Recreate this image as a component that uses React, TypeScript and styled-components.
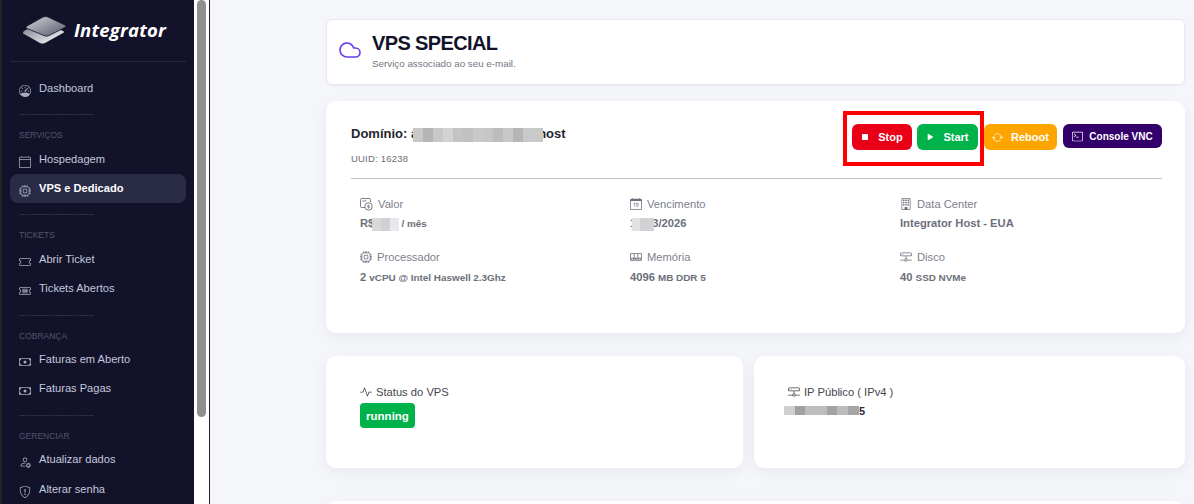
import React from 'react';
import styled, { createGlobalStyle } from 'styled-components';
import { Cloud, Square, Play } from 'lucide-react';
import {
  BsSpeedometer, BsCalendar4, BsCpu, BsTicket, BsTicketDetailed, BsCash, BsPersonGear, BsShieldExclamation,
  BsArrowRepeat, BsTerminal, BsCalendarDate, BsBuilding, BsMemory, BsHddNetwork, BsActivity,
} from 'react-icons/bs';

const GlobalStyle = createGlobalStyle`
  html, body {
    margin: 0;
    padding: 0;
    height: 504px;
    overflow: hidden;
    background: #f5f6fa;
    font-family: "Liberation Sans", Arial, sans-serif;
  }
  * { box-sizing: border-box; }
`;

const Page = styled.div`
  display: flex;
  width: 1194px;
  height: 504px;
  overflow: hidden;
`;

const SideColumn = styled.div`
  display: flex;
  flex: 0 0 210px;
  height: 504px;
  background: #fff;
  border-left: 2px solid #242424;
  border-right: 1px solid #222;
`;

const Sidebar = styled.aside`
  width: 192px;
  height: 504px;
  background: #12132a;
  overflow: hidden;
`;

const ScrollTrack = styled.div`
  width: 15px;
  padding: 0 3px;
`;

const ScrollThumb = styled.div`
  width: 9px;
  height: 417px;
  background: #8f8f8f;
  border-radius: 5px;
`;

const Brand = styled.div`
  display: flex;
  align-items: center;
  height: 62px;
  margin: 0 8px;
  padding: 0 0 2px 12px;
  border-bottom: 1px solid #272840;
  gap: 6px;
`;

const BrandName = styled.span`
  font-family: "Open Sans", sans-serif;
  font-size: 18.5px;
  font-weight: 700;
  font-style: italic;
  color: #fff;
  letter-spacing: 0.2px;
`;

const Nav = styled.nav`
  display: flex;
  flex-direction: column;
  padding: 12px 8px 0;
`;

const NavItem = styled.a<{ $active?: boolean; $tall?: boolean }>`
  display: flex;
  align-items: center;
  flex: none;
  height: ${p => (p.$tall ? 31 : 29)}px;
  padding: 0 0 2px 9px;
  gap: 8px;
  border-radius: 8px;
  font-size: 11.1px;
  color: ${p => (p.$active ? '#fff' : '#c3c8de')};
  font-weight: ${p => (p.$active ? 700 : 400)};
  background: ${p => (p.$active ? '#2a2b47' : 'transparent')};
  svg { flex: none; margin-top: 6px; color: #a6aabf; }
`;

const Dashes = styled.div<{ $top?: number }>`
  margin: ${p => p.$top ?? 4}px 0 0 9px;
  height: 14px;
  font-size: 8px;
  line-height: 14px;
  letter-spacing: 0.35px;
  color: #4c4d63;
`;

const SectionLabel = styled.div<{ $bottom?: number }>`
  margin: 8px 0 ${p => p.$bottom ?? 4}px 9px;
  height: 12px;
  font-size: 8.5px;
  line-height: 12px;
  color: #53546c;
`;

const Main = styled.main`
  flex: 1;
  padding: 19px 9px 0 116px;
`;

const HeaderCard = styled.section`
  display: flex;
  align-items: center;
  height: 66px;
  padding: 0 11px 4px;
  gap: 10px;
  background: #fff;
  border: 1px solid #e8e9ef;
  border-radius: 6px;
  box-shadow: 0 1px 2px rgba(30, 35, 70, 0.05);
`;

const HeaderTitle = styled.h1`
  margin: 0;
  font-size: 20px;
  line-height: 24px;
  font-weight: 700;
  letter-spacing: -0.62px;
  color: #12132a;
`;

const HeaderSub = styled.p`
  margin: 3px 0 0;
  font-size: 9.8px;
  line-height: 12px;
  color: #747785;
`;

const Card = styled.section`
  background: #fff;
  border-radius: 10px;
  box-shadow: 0 4px 14px rgba(30, 35, 70, 0.06);
`;

const ServiceCard = styled(Card)`
  height: 232px;
  margin-top: 16px;
  padding: 10px 23px 0 25px;
`;

const ServiceTop = styled.div`
  display: flex;
  justify-content: space-between;
  height: 68px;
  border-bottom: 1px solid #c4c4c4;
`;

const DomainTitle = styled.h2`
  margin: 15px 0 0;
  font-size: 13px;
  line-height: 16px;
  font-weight: 700;
  color: #26272e;
  white-space: nowrap;
`;

const Uuid = styled.div`
  margin-top: 11px;
  font-size: 9.5px;
  line-height: 12px;
  letter-spacing: 0.2px;
  color: #6c6e76;
`;

const Blur = styled.span<{ $w: number; $h: number; $overL?: number; $overR?: number }>`
  display: inline-block;
  position: relative;
  width: ${p => p.$w}px;
  height: ${p => p.$h}px;
  margin: 0 -${p => p.$overR ?? 0}px 0 -${p => p.$overL ?? 0}px;
  vertical-align: middle;
`;

const Pixel = styled.i<{ $w: number; $c: string }>`
  display: inline-block;
  height: 100%;
  width: ${p => p.$w}px;
  background: ${p => p.$c};
  vertical-align: top;
`;

const Actions = styled.div`
  display: flex;
  align-items: flex-start;
  margin-top: 13px;
  gap: 6px;
`;

const Highlight = styled.div`
  display: flex;
  gap: 5px;
  width: 141px;
  height: 55px;
  margin: -13px -6px 0 0;
  padding: 9px 2px 0 5px;
  border: 4px solid #ff0000;
`;

const ActionButton = styled.button<{ $bg: string; $w: number; $h?: number; $gap?: number }>`
  display: flex;
  align-items: center;
  justify-content: center;
  flex: none;
  gap: ${p => p.$gap ?? 9}px;
  width: ${p => p.$w}px;
  height: ${p => p.$h ?? 26}px;
  border: 0;
  padding: 0;
  border-radius: 6px;
  background: ${p => p.$bg};
  color: #fff;
  font-family: inherit;
  font-size: ${p => (p.$h ? 10 : 11)}px;
  font-weight: 700;
`;

const SpecGrid = styled.div`
  display: grid;
  grid-template-columns: 270px 270px 1fr;
  grid-template-rows: 53px 53px;
  padding: 17px 0 0 9px;
`;

const SpecLabel = styled.div`
  display: flex;
  align-items: center;
  gap: 5px;
  height: 16px;
  font-size: 11.2px;
  color: #7d808c;
  svg { flex: none; color: #6c6f7c; }
`;

const SpecValue = styled.div<{ $top?: number }>`
  margin-top: ${p => p.$top ?? 4}px;
  height: 14px;
  font-size: 11.2px;
  line-height: 14px;
  font-weight: 700;
  color: #6c6f7a;
  white-space: nowrap;
  small { font-size: 9.9px; }
`;

const BottomRow = styled.div`
  display: grid;
  grid-template-columns: 417px 1fr;
  gap: 11px;
  margin-top: 23px;
`;

const InfoCard = styled(Card)`
  height: 112px;
  padding: 28px 34px;
`;

const InfoLabel = styled.div`
  display: flex;
  align-items: center;
  gap: 4px;
  height: 15px;
  font-size: 11.2px;
  color: #45464e;
  svg { flex: none; color: #45464e; }
`;

const StatusBadge = styled.div`
  display: flex;
  align-items: center;
  justify-content: center;
  width: 55px;
  height: 25px;
  margin-top: 4px;
  border-radius: 4px;
  background: #00b24a;
  color: #fff;
  font-size: 11.5px;
  font-weight: 700;
`;

const IpValue = styled.div`
  display: flex;
  align-items: center;
  margin: 5px 0 0 -4px;
  height: 13px;
  font-size: 11px;
  font-weight: 700;
  color: #2c2d33;
`;

const NextCard = styled(Card)`
  height: 40px;
  margin-top: 33px;
`;

const Logo = () => (
  <svg width="46" height="30" viewBox="0 0 46 30">
    <defs>
      <linearGradient id="lg1" x1="0" y1="0" x2="1" y2="1">
        <stop offset="0" stopColor="#d4d4da" />
        <stop offset="1" stopColor="#55566a" />
      </linearGradient>
      <linearGradient id="lg2" x1="0" y1="0" x2="1" y2="1">
        <stop offset="0" stopColor="#77778a" />
        <stop offset="1" stopColor="#ffffff" />
      </linearGradient>
    </defs>
    <path d="M2 16 18 8q3-1 6 0l17 8q2 1 0 2L23 28q-3 1-5 0L2 19q-2-1 0-3Z" fill="url(#lg2)" />
    <path d="M5 11 21 2q3-1 5 0l17 8q2 1 0 2.500L27 20.500q-3 1.500-5 0L5 13.500q-2-1 0-2.500Z" fill="url(#lg1)" stroke="#12132a" strokeWidth="0.8" />
  </svg>
);

const ValorIcon = () => (
  <svg width="13" height="13" viewBox="0 0 13 13" fill="none" stroke="currentColor" strokeWidth="0.9">
    <path d="M5 9.500H1.500q-1 0-1-1v-7q0-1 1-1h8q1 0 1 1V4" />
    <path d="M2.500 3h4" />
    <circle cx="8.500" cy="8.500" r="3.700" />
    <path d="M8.500 6.500v4M9.500 7.500H8q-.8 0-.8.6t.8.6h1q.8 0 .8.6t-.8.6H7.500" strokeWidth="0.6" />
  </svg>
);

const blocks = (cols: string[], w: number) => cols.map((c, i) => <Pixel key={i} $w={w} $c={c} />);

const DASHES = '-------------------------';

export default function App() {
  return (
    <Page>
      <GlobalStyle />
      <SideColumn>
        <Sidebar>
          <Brand>
            <Logo />
            <BrandName>Integrator</BrandName>
          </Brand>
          <Nav>
            <NavItem><BsSpeedometer size={12} /><span>Dashboard</span></NavItem>
            <Dashes>{DASHES}</Dashes>
            <SectionLabel>SERVIÇOS</SectionLabel>
            <NavItem><BsCalendar4 size={12} /><span>Hospedagem</span></NavItem>
            <NavItem $active><BsCpu size={12} /><span>VPS e Dedicado</span></NavItem>
            <Dashes>{DASHES}</Dashes>
            <SectionLabel>TICKETS</SectionLabel>
            <NavItem><BsTicket size={12} /><span>Abrir Ticket</span></NavItem>
            <NavItem><BsTicketDetailed size={12} /><span>Tickets Abertos</span></NavItem>
            <Dashes $top={5}>{DASHES}</Dashes>
            <SectionLabel $bottom={3}>COBRANÇA</SectionLabel>
            <NavItem><BsCash size={12} /><span>Faturas em Aberto</span></NavItem>
            <NavItem><BsCash size={12} /><span>Faturas Pagas</span></NavItem>
            <Dashes $top={5}>{DASHES}</Dashes>
            <SectionLabel $bottom={3}>GERENCIAR</SectionLabel>
            <NavItem><BsPersonGear size={12} /><span>Atualizar dados</span></NavItem>
            <NavItem $tall><BsShieldExclamation size={12} /><span>Alterar senha</span></NavItem>
          </Nav>
        </Sidebar>
        <ScrollTrack><ScrollThumb /></ScrollTrack>
      </SideColumn>
      <Main>
        <HeaderCard>
          <Cloud size={24} color="#6a3cf0" strokeWidth={1.6} />
          <div>
            <HeaderTitle>VPS SPECIAL</HeaderTitle>
            <HeaderSub>Serviço associado ao seu e-mail.</HeaderSub>
          </div>
        </HeaderCard>
        <ServiceCard>
          <ServiceTop>
            <div>
              <DomainTitle>
                Domínio: a
                <Blur $w={130} $h={14} $overL={5} $overR={5}>{blocks(['#c9c9c9', '#b5b5b5', '#c8c8c8', '#d3d3d3', '#c4c4c4', '#c0c0c0', '#c9c9c9', '#c6c6c6', '#bcbcbc', '#c8c8c8', '#b6b6b6', '#c9c9c9', '#c9c9c9'], 10)}</Blur>
                host
              </DomainTitle>
              <Uuid>UUID: 16238</Uuid>
            </div>
            <Actions>
              <Highlight>
                <ActionButton $bg="#ea0016" $w={60}><Square size={8} fill="#fff" strokeWidth={0} />Stop</ActionButton>
                <ActionButton $bg="#00b24a" $w={61}><Play size={8} fill="#fff" strokeWidth={0} />Start</ActionButton>
              </Highlight>
              <ActionButton $bg="#ffa500" $w={73} $gap={8}><BsArrowRepeat size={11} />Reboot</ActionButton>
              <ActionButton $bg="#33006b" $w={99} $h={24} $gap={6}><BsTerminal size={11} />Console VNC</ActionButton>
            </Actions>
          </ServiceTop>
          <SpecGrid>
            <div>
              <SpecLabel><ValorIcon />Valor</SpecLabel>
              <SpecValue>R$<Blur $w={26} $h={13} $overL={2}>{blocks(['#d9d9dc', '#d0d1d4', '#e8e8ea'], 9)}</Blur> <small>/ mês</small></SpecValue>
            </div>
            <div>
              <SpecLabel><BsCalendarDate size={12} />Vencimento</SpecLabel>
              <SpecValue>1<Blur $w={22} $h={13} $overL={4} $overR={2}>{blocks(['#e2e2e4', '#d0d1d4', '#d4d4d7'], 7.4)}</Blur>3/2026</SpecValue>
            </div>
            <div>
              <SpecLabel><BsBuilding size={12} />Data Center</SpecLabel>
              <SpecValue>Integrator Host - EUA</SpecValue>
            </div>
            <div>
              <SpecLabel><BsCpu size={12} />Processador</SpecLabel>
              <SpecValue $top={5}>2 <small>vCPU @ Intel Haswell 2.3Ghz</small></SpecValue>
            </div>
            <div>
              <SpecLabel><BsMemory size={12} />Memória</SpecLabel>
              <SpecValue $top={5}>4096 <small>MB DDR 5</small></SpecValue>
            </div>
            <div>
              <SpecLabel><BsHddNetwork size={12} />Disco</SpecLabel>
              <SpecValue $top={5}>40 <small>SSD NVMe</small></SpecValue>
            </div>
          </SpecGrid>
        </ServiceCard>
        <BottomRow>
          <InfoCard>
            <InfoLabel><BsActivity size={12} />Status do VPS</InfoLabel>
            <StatusBadge>running</StatusBadge>
          </InfoCard>
          <InfoCard>
            <InfoLabel><BsHddNetwork size={12} />IP Público ( IPv4 )</InfoLabel>
            <IpValue>
              <Blur $w={75} $h={9}>{blocks(['#cfcfcf', '#a0a0a0', '#bdbdbd', '#bdbdbd', '#a3a3a3', '#bcbcbc', '#a6a6a6'], 10.7)}</Blur>5
            </IpValue>
          </InfoCard>
        </BottomRow>
        <NextCard />
      </Main>
    </Page>
  );
}
